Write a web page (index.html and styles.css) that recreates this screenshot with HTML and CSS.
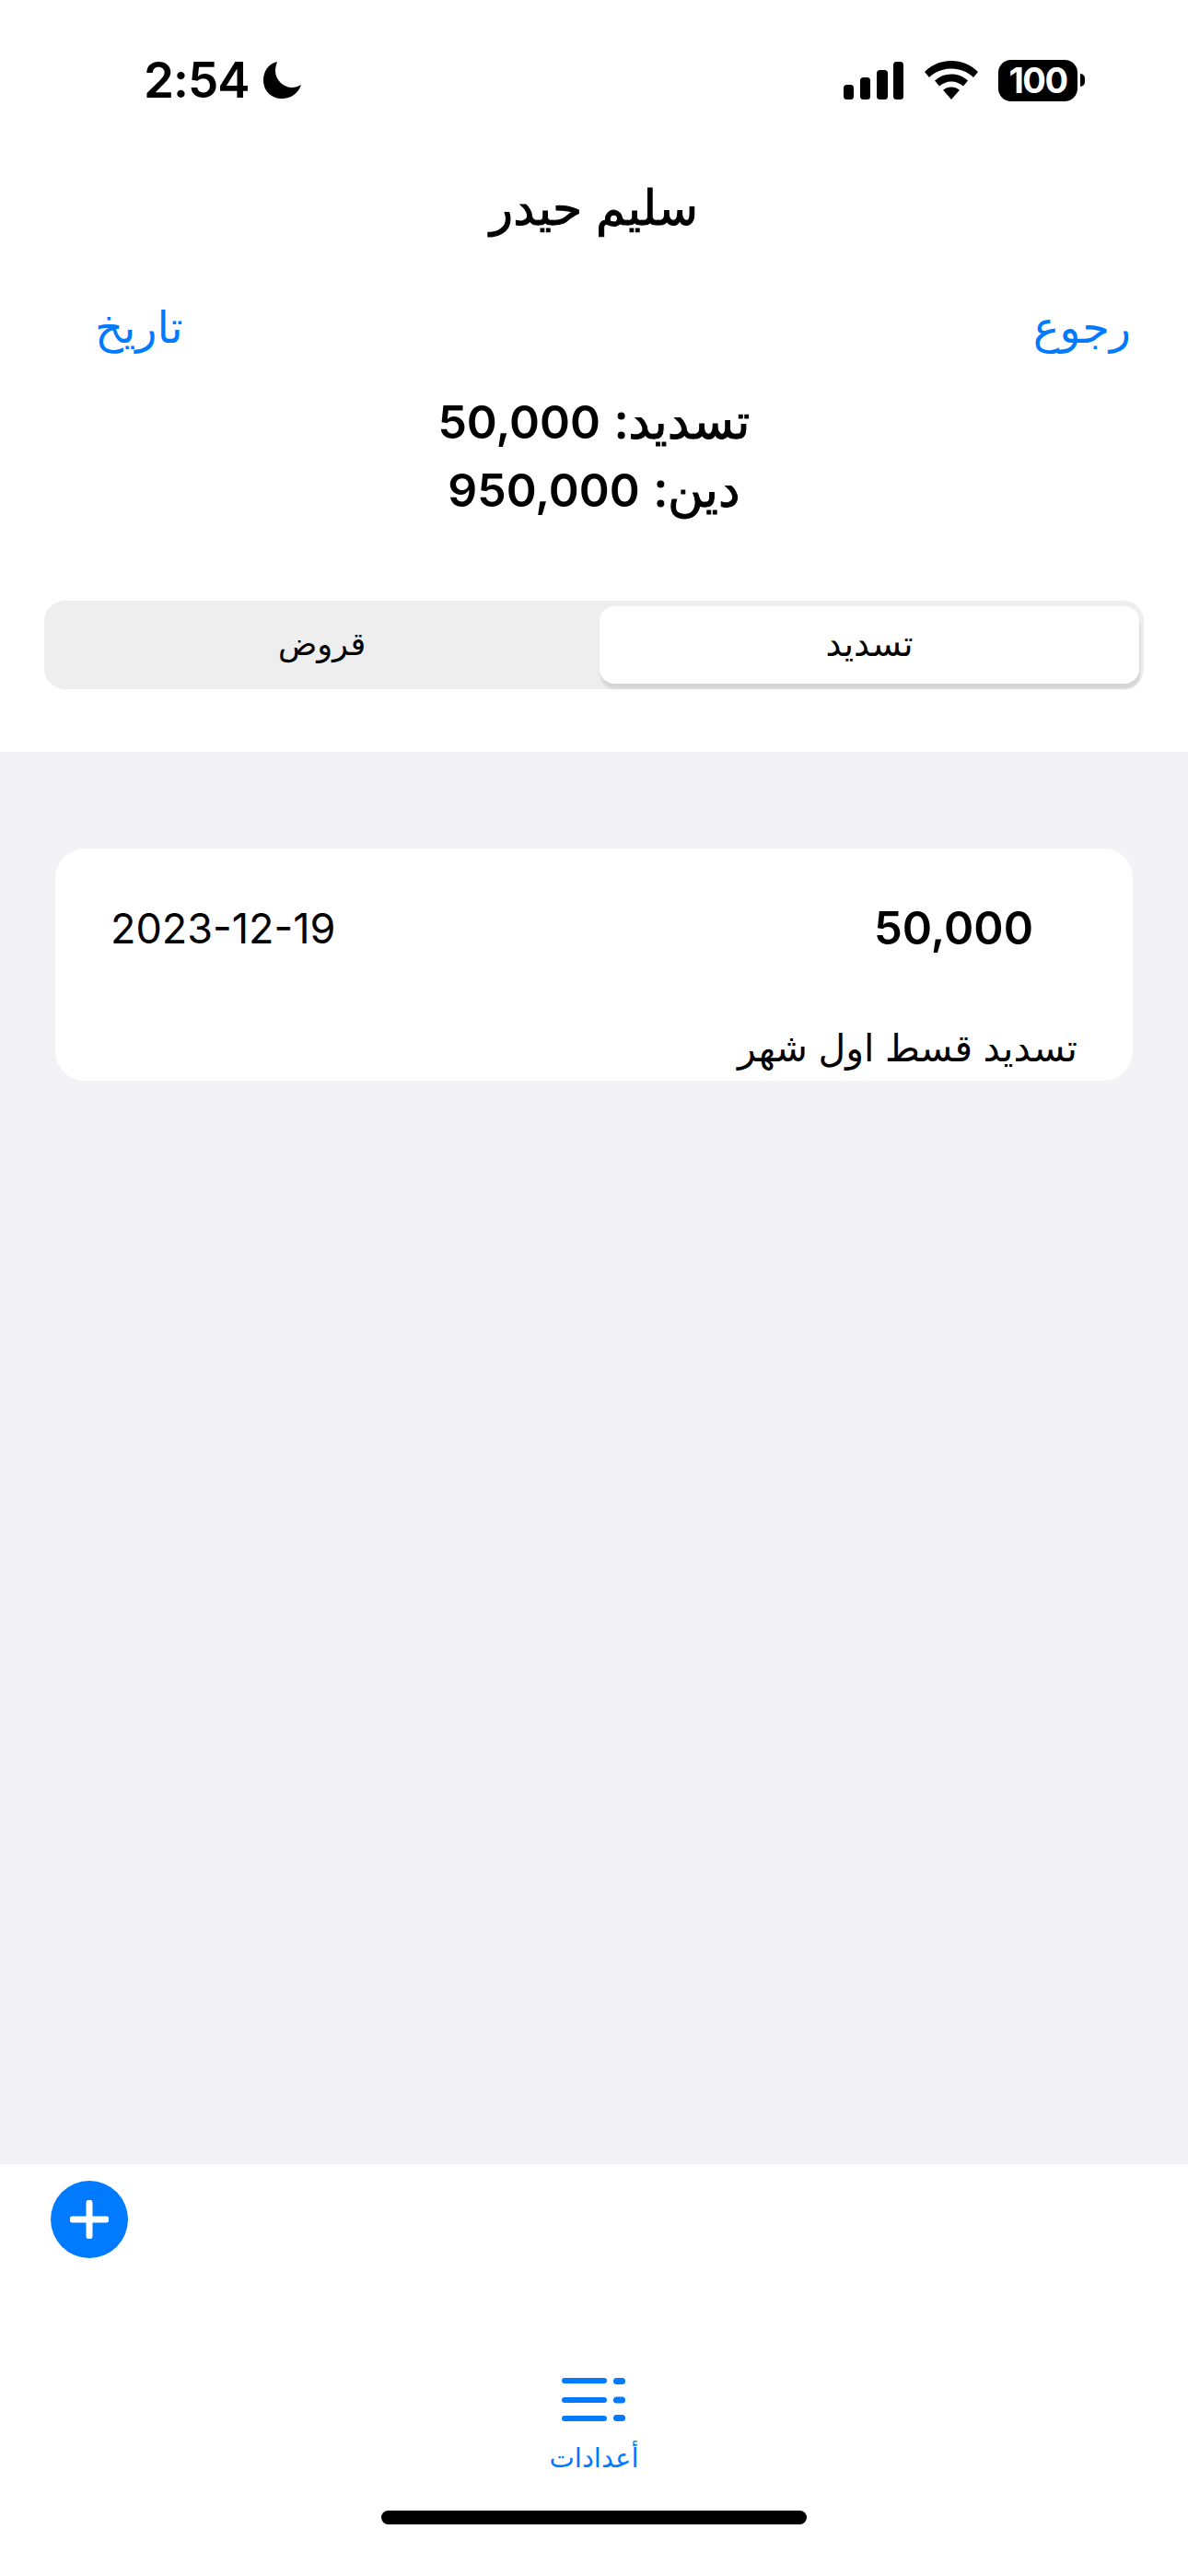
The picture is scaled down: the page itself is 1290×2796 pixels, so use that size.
FILE: index.html
```html
<!DOCTYPE html>
<html lang="ar" dir="rtl">
<head>
    <meta charset="UTF-8">
    <meta name="viewport" content="width=device-width, initial-scale=1.0">
    <title>سليم حيدر</title>
    <link rel="stylesheet" href="styles.css">
</head>
<body>
    <div class="screen">
        <header class="top">
            <div class="status-bar" dir="ltr">
                <div class="status-left">
                    <span class="time">2:54</span>
                    <svg class="moon" viewBox="0 0 41 40"><path d="M15 0C6 2 0 10 0 20c0 12 9 20 20 20 10 0 18-6 21-15-3 2-7 3-10 3-9 0-18-8-18-18 0-4 1-7 2-10z"/></svg>
                </div>
                <div class="status-right">
                    <svg class="signal" viewBox="0 0 65 41">
                        <rect x="0" y="25" width="11" height="16" rx="3.500"/>
                        <rect x="18" y="17" width="11" height="24" rx="3.500"/>
                        <rect x="36" y="9" width="12" height="32" rx="3.500"/>
                        <rect x="54" y="0" width="11" height="41" rx="3.500"/>
                    </svg>
                    <svg class="wifi" viewBox="0 0 58 42">
                        <path d="M29 0C18 0 8 4 0 12l5 6c6.500-6 14.500-9.500 24-9.500S46.500 12 53 18l5-6C50 4 40 0 29 0z"/>
                        <path d="M29 14.500c-7 0-13 2.500-18 7l5 6c3.500-3 8-5 13-5s9.500 2 13 5l5-6c-5-4.500-11-7-18-7z"/>
                        <path d="M29 28.500c-3.500 0-6.500 1.200-9 3.300L29 42l9-10.200c-2.500-2.100-5.500-3.300-9-3.300z"/>
                    </svg>
                    <div class="battery">
                        <span class="battery-body">100</span>
                        <span class="battery-nub"></span>
                    </div>
                </div>
            </div>
            <h1 class="title">سليم حيدر</h1>
            <div class="nav-row">
                <a class="nav-link">رجوع</a>
                <a class="nav-link">تاريخ</a>
            </div>
            <div class="summary">
                <p>تسديد: <span class="summary-num">50,000</span></p>
                <p>دين: <span class="summary-num">950,000</span></p>
            </div>
            <div class="segments">
                <div class="segment active">تسديد</div>
                <div class="segment">قروض</div>
            </div>
        </header>

        <main class="content">
            <div class="card">
                <div class="card-row">
                    <span class="card-amount">50,000</span>
                    <span class="card-date">2023-12-19</span>
                </div>
                <p class="card-note">تسديد قسط اول شهر</p>
            </div>
        </main>

        <footer class="bottom">
            <div class="add-row">
                <button class="add-btn" type="button">
                    <svg viewBox="0 0 42 42"><path d="M21 3v36M3 21h36"/></svg>
                </button>
            </div>
            <div class="tab">
                <svg class="tab-icon" viewBox="0 0 69 47">
                    <path d="M3 3h43M3 24h43M3 44h43"/>
                    <rect x="56" y="0" width="13" height="7" rx="3.500"/>
                    <rect x="56" y="20.500" width="13" height="7" rx="3.500"/>
                    <rect x="56" y="40" width="13" height="7" rx="3.500"/>
                </svg>
                <span class="tab-label">أعدادات</span>
            </div>
            <div class="home-indicator"></div>
        </footer>
    </div>
</body>
</html>
```

FILE: styles.css
```css
:root {
    --blue: #007aff;
    --page-grey: #f2f2f7;
}

* {
    box-sizing: border-box;
    margin: 0;
    padding: 0;
    font-family: Inter, "DejaVu Sans", sans-serif;
}

body {
    background-color: #fff;
    color: #000;
}

.screen {
    width: 1290px;
    height: 2796px;
    display: flex;
    flex-direction: column;
}

/* top part */
.top {
    height: 816px;
    display: flex;
    flex-direction: column;
}

.status-bar {
    height: 64px;
    margin-top: 55px;
    padding: 0 112px 0 156px;
    display: flex;
    justify-content: space-between;
    align-items: center;
}

.status-left,
.status-right {
    display: flex;
    align-items: center;
}

.time {
    font-size: 53px;
    font-weight: 600;
    line-height: 64px;
    letter-spacing: -1px;
}

.moon {
    width: 41px;
    height: 40px;
    margin-left: 15px;
}

.signal {
    width: 65px;
    height: 41px;
}

.wifi {
    width: 58px;
    height: 42px;
    margin-left: 23px;
}

.battery {
    display: flex;
    align-items: center;
    margin-left: 22px;
}

.battery-body {
    width: 86px;
    height: 45px;
    background-color: #000;
    border-radius: 14px;
    color: #fff;
    font-size: 38px;
    font-weight: 700;
    line-height: 45px;
    letter-spacing: -1.500px;
    text-align: center;
}

.battery-nub {
    width: 5px;
    height: 14px;
    margin-left: 3px;
    background-color: #000;
    border-radius: 0 5px 5px 0;
}

.title {
    margin-top: 75px;
    font-size: 52px;
    font-weight: 400;
    -webkit-text-stroke: 1px #000;
    line-height: 64px;
    text-align: center;
}

.nav-row {
    margin-top: 65px;
    padding: 0 62px 0 103px;
    display: flex;
    justify-content: space-between;
    align-items: center;
    height: 64px;
}

.nav-link {
    color: var(--blue);
    font-size: 48px;
    line-height: 64px;
}

.summary {
    margin-top: 34px;
    text-align: center;
    font-size: 53px;
    -webkit-text-stroke: 1px #000;
    line-height: 73px;
}

.summary-num {
    font-size: 50px;
    font-weight: 600;
    -webkit-text-stroke: 0;
}

.segments {
    margin: 83px 48px 0;
    height: 96px;
    padding: 6px 5px 6px 0;
    display: flex;
    background-color: #eeeeee;
    border-radius: 22px;
}

.segment {
    flex: 1;
    display: flex;
    align-items: center;
    justify-content: center;
    font-size: 35px;
    padding-bottom: 4px;
}

.segment.active {
    flex: none;
    width: 586px;
    font-size: 38px;
    background-color: #fff;
    border-radius: 16px;
    box-shadow: 1px 6px 3px rgba(0, 0, 0, 0.1);
}

/* list */
.content {
    flex: 1;
    background-color: var(--page-grey);
    padding: 105px 60px 0;
}

.card {
    height: 252px;
    background-color: #fff;
    border-radius: 32px;
    padding: 54px 60px 0;
    overflow: hidden;
}

.card-row {
    display: flex;
    justify-content: space-between;
    align-items: center;
    padding-right: 48px;
    height: 64px;
}

.card-amount {
    font-size: 49px;
    font-weight: 600;
}

.card-date {
    font-size: 45px;
}

.card-note {
    margin-top: 66px;
    font-size: 41px;
    line-height: 64px;
}

/* bottom part */
.bottom {
    height: 447px;
    display: flex;
    flex-direction: column;
    align-items: center;
}

.add-row {
    width: 100%;
    padding: 18px 55px 0;
    display: flex;
    justify-content: flex-end;
}

.add-btn {
    width: 84px;
    height: 84px;
    border: none;
    border-radius: 50%;
    background-color: var(--blue);
    display: flex;
    align-items: center;
    justify-content: center;
}

.add-btn svg {
    width: 42px;
    height: 42px;
    fill: none;
    stroke: #fff;
    stroke-width: 7;
    stroke-linecap: round;
}

.tab {
    margin-top: 130px;
    display: flex;
    flex-direction: column;
    align-items: center;
}

.tab-icon {
    width: 69px;
    height: 47px;
    margin-left: -1px;
    fill: var(--blue);
    stroke: none;
}

.tab-icon path {
    fill: none;
    stroke: var(--blue);
    stroke-width: 6;
    stroke-linecap: round;
}

.tab-label {
    margin-top: 20px;
    color: var(--blue);
    font-size: 29px;
    line-height: 40px;
}

.home-indicator {
    margin-top: 37px;
    width: 462px;
    height: 15px;
    background-color: #000;
    border-radius: 8px;
}
```
